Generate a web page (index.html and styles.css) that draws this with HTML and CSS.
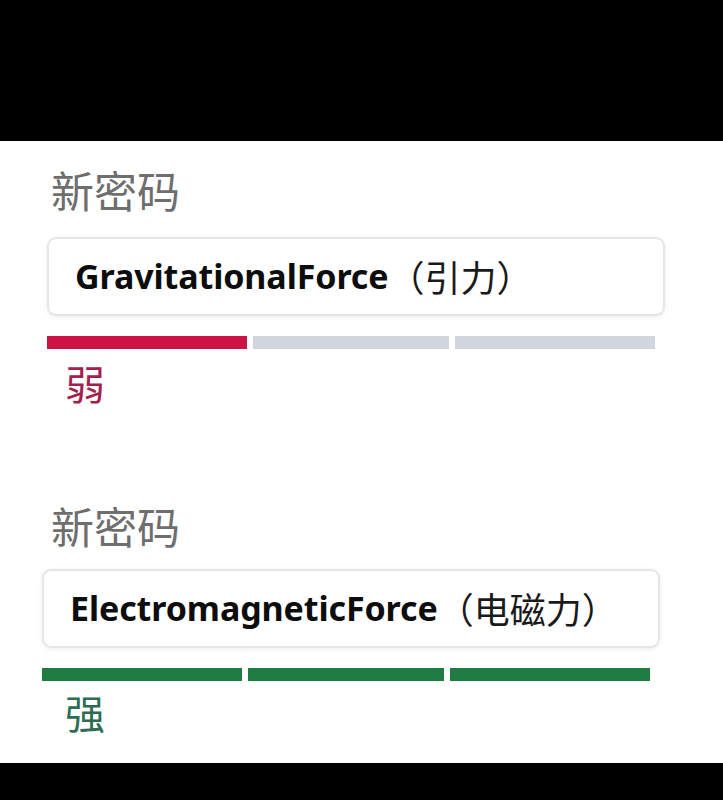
FILE: index.html
```html
<!DOCTYPE html>
<html lang="zh-CN">
<head>
<meta charset="UTF-8" />
<meta name="viewport" content="width=device-width, initial-scale=1"/>
<title>新密码 - 强度</title>
<link rel="stylesheet" href="styles.css">
</head>
<body>
<div class="top-bar"></div>
<main class="panel">
  <section class="field">
    <div class="field-label">新密码</div>
    <div class="field-box">
      <div class="field-input">GravitationalForce<span class="cjk">（引力）</span></div>
      <div class="meter weak">
        <span class="seg on"></span>
        <span class="seg"></span>
        <span class="seg"></span>
      </div>
    </div>
    <div class="strength weak-text">弱</div>
  </section>

  <section class="field second">
    <div class="field-label">新密码</div>
    <div class="field-box shifted">
      <div class="field-input">ElectromagneticForce<span class="cjk">（电磁力）</span></div>
      <div class="meter strong">
        <span class="seg on"></span>
        <span class="seg on"></span>
        <span class="seg on"></span>
      </div>
    </div>
    <div class="strength strong-text">强</div>
  </section>
</main>
<div class="bottom-bar"></div>
</body>
</html>
```

FILE: styles.css
```css
/* Reset & base */
* {
  box-sizing: border-box;
}
body, html {
  margin: 0; padding: 0;
  width: 100%;
  height: 100%;
  background: #000;
  font-family: 'Noto Sans', 'Noto Sans CJK SC', sans-serif;
  overflow: hidden;
}
.top-bar {
  height: 141px;
  background: #000;
}
.bottom-bar {
  height: 37px;
  background: #000;
}
.panel {
  height: 622px;
  background: #fff;
  padding: 18px 0 0 47px;
}
.field-label {
  font-family: 'Noto Sans CJK SC', sans-serif;
  font-size: 43px;
  line-height: 60px;
  color: #6e6e6e;
  padding-left: 4px;
}
.field-box {
  margin-top: 18px;
}
.field-box.shifted {
  margin-left: -5px;
  margin-top: 14px;
}
.field-input {
  width: 618px;
  height: 79px;
  border: 2px solid #e6e6e6;
  border-radius: 9px;
  box-shadow: 0 1px 4px rgba(0,0,0,0.08);
  padding: 0 0 2px 26px;
  display: flex;
  align-items: center;
  font-size: 34px;
  font-weight: 700;
  color: #0d0d0d;
  letter-spacing: -0.1px;
}
.field-input .cjk {
  font-family: 'Noto Sans CJK SC', sans-serif;
  font-size: 36px;
  font-weight: 400;
  color: #1a1a1a;
  letter-spacing: 0;
}
.meter {
  display: grid;
  grid-template-columns: 200px 196px 200px;
  gap: 6px;
  margin-top: 20px;
}
.seg {
  height: 13px;
  background: #d1d5de;
}
.meter.weak .seg.on {
  background: #cc1343;
}
.meter.strong .seg.on {
  background: #1f7d43;
}
.strength {
  font-family: 'Noto Sans CJK SC', sans-serif;
  font-size: 40px;
  line-height: 56px;
  padding-left: 18px;
  margin-top: 6px;
}
.weak-text {
  color: #a4204f;
}
.strong-text {
  color: #2d6d52;
}
.field.second {
  margin-top: 84px;
}
.field.second .strength {
  margin-top: 3px;
}
```
